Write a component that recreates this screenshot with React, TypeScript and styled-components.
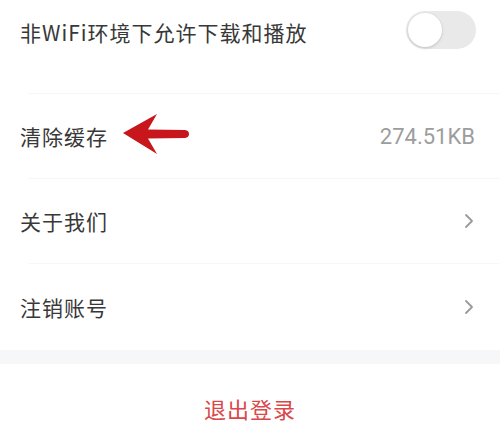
import React, { useState } from "react";
import styled, { createGlobalStyle } from "styled-components";

const GlobalStyle = createGlobalStyle`
  html, body {
    margin: 0;
    padding: 0;
    background: #fff;
  }
  body {
    font-family: "Noto Sans CJK SC", "Noto Sans", sans-serif;
  }
`;

export default function App() {
  const [wifiOn, setWifiOn] = useState(false);
  return (
    <Page>
      <GlobalStyle />
      <Section>
        <Row height="64px">
          <Label>非WiFi环境下允许下载和播放</Label>
          <Toggle on={wifiOn} onClick={() => setWifiOn(!wifiOn)}>
            <Knob on={wifiOn} />
          </Toggle>
        </Row>
        <Spacer />
        <Divider />
        <Row height="84px">
          <LabelGroup>
            <Label>清除缓存</Label>
            <Arrow width="70" height="42" viewBox="0 0 70 42">
              <path d="M2 20 L36 1 L27 16.5 L64 17 Q68 17.5 68 21 Q68 24.5 64 25 L27 25.5 L36 41 Z" fill="#c8161d" />
            </Arrow>
          </LabelGroup>
          <Value>274.51KB</Value>
        </Row>
        <Divider />
        <Row height="84px">
          <Label>关于我们</Label>
          <Chevron />
        </Row>
        <Divider />
        <Row height="86px">
          <Label>注销账号</Label>
          <Chevron />
        </Row>
      </Section>
      <Band />
      <Logout>退出登录</Logout>
    </Page>
  );
}

function Chevron() {
  return (
    <ChevronSvg width="12" height="16" viewBox="0 0 12 16">
      <path d="M3 2 L9 8 L3 14" fill="none" stroke="#9a9a9a" strokeWidth="1.8" strokeLinecap="round" strokeLinejoin="round" />
    </ChevronSvg>
  );
}

const Page = styled.div`
  width: 500px;
  height: 439px;
  overflow: hidden;
  background: #fff;
  display: flex;
  flex-direction: column;
`;

const Section = styled.div`
  display: flex;
  flex-direction: column;
`;

const Row = styled.div<{ height: string }>`
  height: ${(p) => p.height};
  padding: 0 24px 0 20px;
  display: flex;
  align-items: center;
  justify-content: space-between;
  box-sizing: border-box;
`;

const Spacer = styled.div`
  height: 29px;
`;

const Divider = styled.div`
  height: 1px;
  margin-left: 28px;
  background: #f7f7f7;
`;

const LabelGroup = styled.div`
  display: flex;
  align-items: center;
  gap: 13px;
`;

const Label = styled.span`
  font-size: 21px;
  color: #383838;
  letter-spacing: 1px;
`;

const Value = styled.span`
  font-family: "Roboto", "Noto Sans", sans-serif;
  font-size: 22px;
  color: #9d9d9d;
  margin-right: 1px;
`;

const Arrow = styled.svg`
  display: block;
  margin-top: -4px;
`;

const ChevronSvg = styled.svg`
  display: block;
  margin-right: 1px;
`;

const Toggle = styled.div<{ on: boolean }>`
  width: 70px;
  height: 38px;
  border-radius: 19px;
  background: ${(p) => (p.on ? "#d9484a" : "#e9e9e9")};
  position: relative;
  margin-top: -4px;
  cursor: pointer;
`;

const Knob = styled.div<{ on: boolean }>`
  position: absolute;
  top: 2px;
  left: ${(p) => (p.on ? "34px" : "2px")};
  width: 34px;
  height: 34px;
  border-radius: 50%;
  background: #fff;
  box-shadow: 0 1px 3px rgba(0, 0, 0, 0.18);
`;

const Band = styled.div`
  height: 14px;
  background: #f6f7f9;
`;

const Logout = styled.div`
  flex: 1;
  display: flex;
  align-items: center;
  justify-content: center;
  font-size: 22px;
  color: #d9484a;
  letter-spacing: 1px;
  padding-top: 12px;
`;
